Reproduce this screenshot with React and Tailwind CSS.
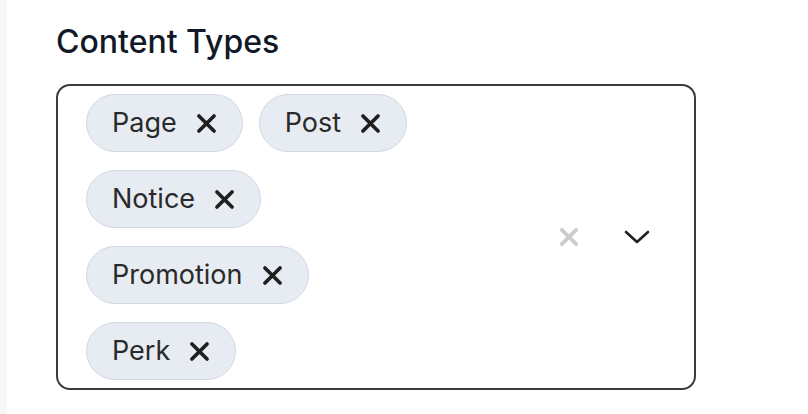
import React from "react";

const tags = ["Page", "Post", "Notice", "Promotion", "Perk"];

function XIcon({ className, stroke = 3.4 }) {
  return (
    <svg viewBox="0 0 20 20" className={className} fill="none">
      <path
        d="M2.8 2.8 L17.2 17.2 M17.2 2.8 L2.8 17.2"
        stroke="currentColor"
        strokeWidth={stroke}
        strokeLinecap="round"
      />
    </svg>
  );
}

export default function App() {
  return (
    <div
      className="flex w-[808px] h-[414px] bg-white"
      style={{ fontFamily: "Inter, 'Noto Sans', sans-serif" }}
    >
      <div className="w-[7px] h-full bg-[#f7f7f8]" />

      <div className="pl-[49px] pt-[22px]">
        <h2 className="text-[32px] leading-[40px] font-medium text-[#111827]">
          Content Types
        </h2>

        {/* Multi select */}
        <div className="mt-[22px] w-[640px] h-[306px] flex items-center border-2 border-[#3b3b3e] rounded-[14px]">
          <div className="w-[384px] self-stretch pl-[28px] pt-[8px] flex flex-wrap content-start gap-x-[16px] gap-y-[18px]">
            {tags.map((t) => (
              <div
                key={t}
                className="h-[58px] flex items-center pl-[25px] pr-[25px] gap-[19px] rounded-full bg-[#e7ebf2] border border-[#d2d9e3] text-[#2a2a2a] text-[27px]"
              >
                <span>{t}</span>
                <XIcon className="w-[21px] h-[21px] text-[#1f1f1f]" stroke={3.5} />
              </div>
            ))}
          </div>

          <div className="flex-1 flex items-center justify-end pr-[44px] gap-[45px]">
            <XIcon className="w-[20px] h-[20px] text-[#cccccc]" stroke={3.8} />
            <svg viewBox="0 0 26 16" className="w-[26px] h-[16px]" fill="none">
              <path
                d="M2 3 L13 13 L24 3"
                stroke="#222222"
                strokeWidth="2.6"
                strokeLinecap="round"
                strokeLinejoin="round"
              />
            </svg>
          </div>
        </div>
      </div>
    </div>
  );
}
